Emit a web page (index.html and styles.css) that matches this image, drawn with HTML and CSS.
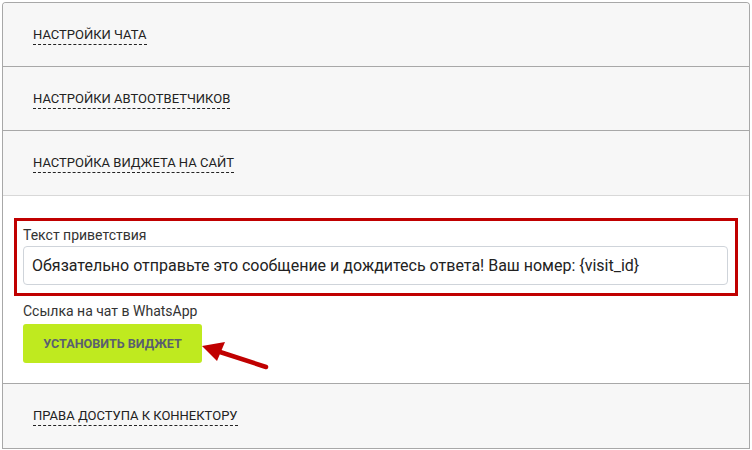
FILE: index.html
```html
<!DOCTYPE html>
<html lang="ru">
<head>
<meta charset="utf-8">
<link rel="stylesheet" href="styles.css">
</head>
<body>
<div class="panel">
  <div class="row"><span class="title">Настройки чата</span></div>
  <div class="row"><span class="title">Настройки автоответчиков</span></div>
  <div class="row row-open"><span class="title">Настройка виджета на сайт</span></div>
  <div class="content">
    <div class="group">
      <div class="label">Текст приветствия</div>
      <div class="input">Обязательно отправьте это сообщение и дождитесь ответа! Ваш номер: {visit_id}</div>
    </div>
    <div class="label link-label">Ссылка на чат в WhatsApp</div>
    <div class="btn-wrap">
      <button class="btn">Установить виджет</button>
      <svg class="arrow" width="80" height="36" viewBox="0 0 80 36">
        <path d="M64 27 L18 12" stroke="#c00000" stroke-width="4.5" stroke-linecap="round" fill="none"/>
        <path d="M0 6 L23 2 L15 21 Z" fill="#c00000"/>
      </svg>
    </div>
  </div>
  <div class="row row-last"><span class="title">Права доступа к коннектору</span></div>
</div>
</body>
</html>
```
FILE: styles.css
```css
html, body {
  margin: 0;
  padding: 0;
  background: #ffffff;
}
body {
  padding: 2px 2px 0 2px;
  font-family: Roboto, "Liberation Sans", sans-serif;
  color: #222;
}
.panel {
  border: 1px solid #a8a8a8;
  border-bottom: none;
  border-radius: 4px 4px 0 0;
  overflow: hidden;
}
.row {
  height: 63px;
  background: #f7f7f7;
  border-bottom: 1px solid #a8a8a8;
  display: flex;
  align-items: center;
  padding-left: 30px;
}
.row-open {
  height: 64px;
  border-bottom-color: #d8d8d8;
}
.row-last {
  height: 64px;
}
.title {
  font-size: 13px;
  text-transform: uppercase;
  color: #222;
  line-height: 16px;
  border-bottom: 1px dashed #222;
  padding-bottom: 1px;
  margin-top: 2px;
}
.content {
  background: #fff;
  padding: 22px 11px 20px 11px;
  border-bottom: 1px solid #a8a8a8;
}
.group {
  border: 3px solid #c00000;
  padding: 5px 7px 8px 6px;
}
.label {
  font-family: Roboto, "Liberation Sans", sans-serif;
  font-size: 14px;
  line-height: 18px;
  color: #333;
}
.input {
  margin-top: 2px;
  height: 37px;
  border: 1px solid #cfd4da;
  border-radius: 4px;
  padding: 0 8px;
  display: flex;
  align-items: center;
  font-size: 16px;
  color: #222;
}
.link-label {
  margin-top: 6px;
  padding-left: 9px;
}
.btn-wrap {
  position: relative;
  padding-left: 9px;
  margin-top: 4px;
}
.btn {
  width: 179px;
  height: 39px;
  background: #bfea1f;
  border: none;
  border-radius: 3px;
  font-family: Roboto, "Liberation Sans", sans-serif;
  font-weight: bold;
  font-size: 12.6px;
  text-transform: uppercase;
  color: #5a5f70;
  display: block;
  padding: 0;
}
.arrow {
  position: absolute;
  left: 188px;
  top: 16px;
}
```
